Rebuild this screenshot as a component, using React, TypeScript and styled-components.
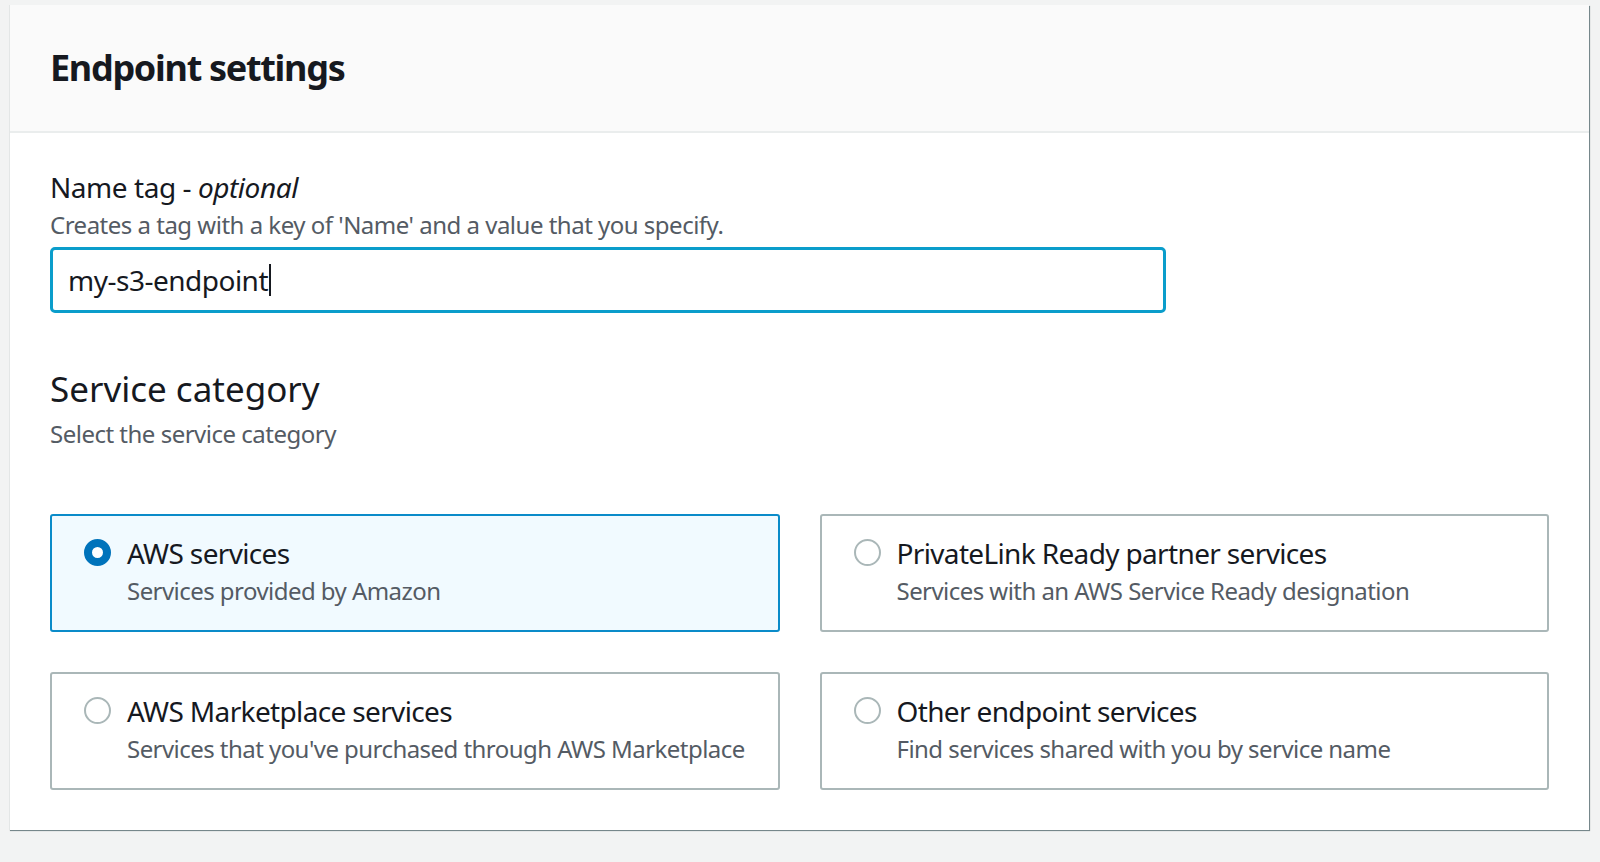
import React from 'react';
import styled, { createGlobalStyle } from 'styled-components';

const GlobalStyle = createGlobalStyle`
  html, body {
    margin: 0;
    padding: 0;
    background: #f2f3f3;
    font-family: "Noto Sans", "Open Sans", Arial, sans-serif;
    color: #16191f;
  }
`;

const Page = styled.div`
  padding: 5px 11px 30px 9px;
`;

const Panel = styled.section`
  width: 1580px;
  box-sizing: border-box;
  background: #ffffff;
  border-left: 1px solid #e3e6e6;
  box-shadow: 1px 1px 1px 0 rgba(0, 28, 36, 0.3), 1px 1px 0 0 #aab7b8;
`;

const Header = styled.header`
  background: #fafafa;
  border-bottom: 2px solid #eaeded;
  height: 126px;
  box-sizing: content-box;
  padding: 0 40px;
  display: flex;
  align-items: center;
`;

const Title = styled.h2`
  margin: 0 0 2px;
  font-size: 36px;
  font-weight: 700;
  letter-spacing: -1.3px;
  color: #16191f;
`;

const Body = styled.div`
  padding: 36px 40px 40px;
  display: flex;
  flex-direction: column;
`;

const Label = styled.div`
  font-size: 28px;
  line-height: 36px;
  letter-spacing: -0.45px;
  color: #16191f;

  em {
    font-style: italic;
  }
`;

const Hint = styled.div<{ $gap?: number }>`
  font-size: 24px;
  line-height: 32px;
  letter-spacing: -0.5px;
  color: #545b64;
  margin-top: ${(p) => p.$gap ?? 4}px;
`;

const FakeInput = styled.div`
  margin-top: 6px;
  width: 1116px;
  height: 66px;
  box-sizing: border-box;
  border: 3px solid #0a9dcb;
  border-radius: 5px;
  padding: 0 15px;
  display: flex;
  align-items: center;
  font-size: 28px;
  letter-spacing: -0.5px;
  color: #16191f;
`;

const Caret = styled.span`
  display: inline-block;
  width: 1.5px;
  height: 32px;
  background: #16191f;
  margin-left: 1px;
`;

const SectionHeading = styled.h3`
  margin: 54px 0 0;
  font-size: 35px;
  line-height: 44px;
  font-weight: 400;
  color: #16191f;
`;

const Tiles = styled.div`
  margin-top: 64px;
  display: grid;
  grid-template-columns: 1fr 1fr;
  column-gap: 40px;
  row-gap: 40px;
`;

const Tile = styled.label<{ $selected?: boolean }>`
  box-sizing: border-box;
  height: 118px;
  border: 2px solid ${(p) => (p.$selected ? '#0a8bc9' : '#aab7b8')};
  border-radius: 3px;
  background: ${(p) => (p.$selected ? '#f1faff' : '#ffffff')};
  padding: 19px 20px 0 32px;
  display: flex;
  align-items: flex-start;
  gap: 16px;
  cursor: pointer;
`;

const Radio = styled.span<{ $checked?: boolean }>`
  flex: none;
  width: 27px;
  height: 27px;
  box-sizing: border-box;
  border-radius: 50%;
  margin-top: 4px;
  border: ${(p) => (p.$checked ? '8px solid #0073bb' : '2px solid #aab7b8')};
  background: #ffffff;
`;

const TileText = styled.div`
  display: flex;
  flex-direction: column;
`;

const TileTitle = styled.div`
  font-size: 28px;
  line-height: 36px;
  letter-spacing: -0.65px;
  color: #16191f;
`;

const TileDesc = styled.div`
  font-size: 24px;
  line-height: 32px;
  letter-spacing: -0.55px;
  color: #545b64;
  margin-top: 4px;
`;

const options = [
  { id: 'aws', title: 'AWS services', desc: 'Services provided by Amazon' },
  {
    id: 'partner',
    title: 'PrivateLink Ready partner services',
    desc: 'Services with an AWS Service Ready designation',
  },
  {
    id: 'marketplace',
    title: 'AWS Marketplace services',
    desc: "Services that you've purchased through AWS Marketplace",
  },
  {
    id: 'other',
    title: 'Other endpoint services',
    desc: 'Find services shared with you by service name',
  },
];

const App = () => {
  const selected = 'aws';

  return (
    <>
      <GlobalStyle />
      <Page>
        <Panel>
          <Header>
            <Title>Endpoint settings</Title>
          </Header>
          <Body>
            <Label>
              Name tag - <em>optional</em>
            </Label>
            <Hint>Creates a tag with a key of 'Name' and a value that you specify.</Hint>
            <FakeInput>
              my-s3-endpoint
              <Caret />
            </FakeInput>

            <SectionHeading>Service category</SectionHeading>
            <Hint $gap={7}>Select the service category</Hint>

            <Tiles>
              {options.map((opt) => {
                const isSelected = opt.id === selected;
                return (
                  <Tile key={opt.id} $selected={isSelected}>
                    <Radio $checked={isSelected} />
                    <TileText>
                      <TileTitle>{opt.title}</TileTitle>
                      <TileDesc>{opt.desc}</TileDesc>
                    </TileText>
                  </Tile>
                );
              })}
            </Tiles>
          </Body>
        </Panel>
      </Page>
    </>
  );
};

export default App;
